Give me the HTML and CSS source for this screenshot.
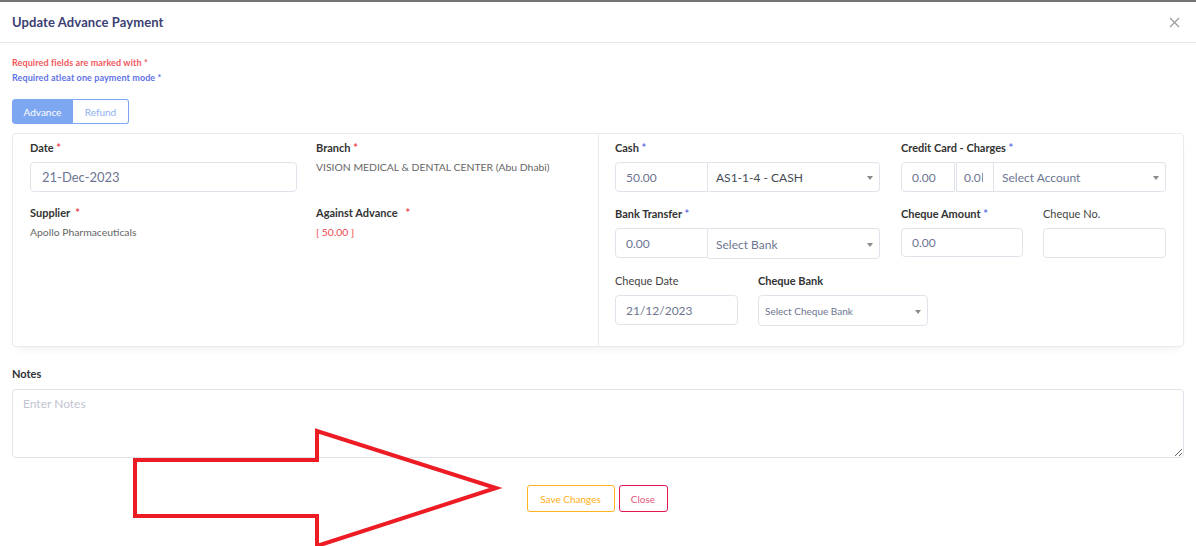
FILE: index.html
```html
<!DOCTYPE html>
<html lang="en">
<head>
<meta charset="utf-8">
<title>Update Advance Payment</title>
<link rel="stylesheet" href="styles.css">
</head>
<body>
<div class="modal">
  <div class="modal-header">
    <h5 class="modal-title">Update Advance Payment</h5>
    <svg class="close-x" width="11" height="11" viewBox="0 0 11 11"><path d="M1 1L10 10M10 1L1 10" stroke="#9a9a9a" stroke-width="1.2" fill="none"/></svg>
  </div>
  <div class="modal-body">
    <p class="req req-red">Required fields are marked with *</p>
    <p class="req req-blue">Required atleat one payment mode *</p>
    <div class="tabs">
      <span class="tab tab-active">Advance</span><span class="tab">Refund</span>
    </div>

    <div class="card">
      <div class="sec sec-left">
        <div class="field">
          <div class="label">Date <span class="star red">*</span></div>
          <div class="input input-lg">21-Dec-2023</div>
        </div>
        <div class="field">
          <div class="label">Branch <span class="star red">*</span></div>
          <div class="value">VISION MEDICAL &amp; DENTAL CENTER (Abu Dhabi)</div>
        </div>
        <div class="field">
          <div class="label">Supplier &nbsp;<span class="star red">*</span></div>
          <div class="value">Apollo Pharmaceuticals</div>
        </div>
        <div class="field">
          <div class="label">Against Advance &nbsp;&nbsp;<span class="star red">*</span></div>
          <div class="value value-red">[ 50.00 ]</div>
        </div>
      </div>

      <div class="sec sec-right">
        <div class="row2">
          <div class="field">
            <div class="label">Cash <span class="star blue">*</span></div>
            <div class="group">
              <div class="input g-cash">50.00</div>
              <div class="input select g-sel dark">AS1-1-4 - CASH<span class="caret"></span></div>
            </div>
          </div>
          <div class="field">
            <div class="label">Credit Card - Charges <span class="star blue">*</span></div>
            <div class="group">
              <div class="input g-cc1">0.00</div>
              <div class="input g-cc2">0.0</div>
              <div class="input select g-sel">Select Account<span class="caret"></span></div>
            </div>
          </div>
        </div>
        <div class="row2">
          <div class="field">
            <div class="label">Bank Transfer <span class="star blue">*</span></div>
            <div class="group">
              <div class="input g-cash">0.00</div>
              <div class="input select g-sel sel-low">Select Bank<span class="caret"></span></div>
            </div>
          </div>
          <div class="pair">
            <div class="field">
              <div class="label">Cheque Amount <span class="star blue">*</span></div>
              <div class="input input-short">0.00</div>
            </div>
            <div class="field">
              <div class="label label-light">Cheque No.</div>
              <div class="input"></div>
            </div>
          </div>
        </div>
        <div class="row-cheque">
          <div class="field f-cdate">
            <div class="label label-light">Cheque Date</div>
            <div class="input">21/12/2023</div>
          </div>
          <div class="field f-cbank">
            <div class="label">Cheque Bank</div>
            <div class="input select small">Select Cheque Bank<span class="caret"></span></div>
          </div>
        </div>
      </div>
    </div>

    <div class="notes">
      <div class="label">Notes</div>
      <textarea class="textarea" placeholder="Enter Notes"></textarea>
    </div>

    <div class="footer">
      <span class="btn btn-save">Save Changes</span>
      <span class="btn btn-close">Close</span>
    </div>
  </div>

  <svg class="arrow" width="1196" height="546" viewBox="0 0 1196 546">
    <polygon points="135,460 317,460 317,431 496,488 317,546 317,516 135,516" fill="none" stroke="#ed1c24" stroke-width="4"/>
  </svg>
</div>
</body>
</html>
```

FILE: styles.css
```css
* { box-sizing: border-box; }

html, body {
  margin: 0;
  padding: 0;
  background: #ffffff;
}

body {
  font-family: "Lato", "Noto Sans", "Liberation Sans", sans-serif;
  color: #343a40;
}

.modal {
  position: relative;
  width: 1196px;
  height: 546px;
  overflow: hidden;
  border-top: 2px solid #737373;
  background: #fff;
}

.modal-header {
  height: 41px;
  display: flex;
  align-items: center;
  justify-content: space-between;
  padding: 0 16px 0 12px;
  border-bottom: 1px solid #e6e6ef;
}

.modal-title {
  margin: 0;
  font-size: 13px;
  font-weight: 700;
  color: #3b4072;
  letter-spacing: 0.1px;
}

.modal-body {
  padding: 12px 12px 0 12px;
}

.req {
  margin: 0;
  font-size: 9px;
  font-weight: 700;
  line-height: 15px;
  letter-spacing: 0.1px;
}
.req-red { color: #f2575c; }
.req-blue { color: #5f73e6; }

.tabs {
  display: flex;
  margin-top: 14px;
  height: 25px;
}

.tab {
  display: flex;
  align-items: center;
  justify-content: center;
  height: 25px;
  font-size: 10px;
  color: #8eaef1;
  border: 1px solid #7ea6f0;
  border-left: none;
  border-radius: 0 3px 3px 0;
  width: 56px;
  background: #fff;
}
.tab-active {
  width: 61px;
  background: #7ea7f1;
  color: #fff;
  border: 1px solid #7ea7f1;
  border-radius: 3px 0 0 3px;
}

.card {
  margin-top: 9px;
  border: 1px solid #e7eaee;
  border-radius: 4px;
  display: grid;
  grid-template-columns: 585px 1fr;
  box-shadow: 0 6px 8px -4px rgba(0, 0, 0, 0.06);
}

.sec {
  padding: 7px 17px 20px 17px;
}

.sec-left {
  display: grid;
  grid-template-columns: 267px 1fr;
  column-gap: 19px;
  row-gap: 14px;
  align-content: start;
}

.sec-right {
  border-left: 1px solid #e7eaee;
  padding-left: 16px;
  display: flex;
  flex-direction: column;
  gap: 15px;
}

.label {
  font-size: 11px;
  font-weight: 700;
  color: #333;
  line-height: 14px;
  margin-bottom: 7px;
}
.label-light { font-weight: 400; color: #444; }

.star { font-weight: 700; }
.star.red { color: #f0474d; }
.star.blue { color: #5f73e6; }

.value {
  font-size: 10.4px;
  color: #666;
  line-height: 13px;
  margin-top: -1px;
}
.value-red { color: #f0474d; }

.input {
  height: 30px;
  border: 1px solid #e0e4ea;
  border-radius: 4px;
  padding: 0 10px;
  display: flex;
  align-items: center;
  font-size: 12px;
  color: #6d7591;
  background: #fff;
  white-space: nowrap;
  overflow: hidden;
  position: relative;
}

.input-lg {
  font-size: 13px;
  padding-left: 11px;
}

.row2 {
  display: grid;
  grid-template-columns: 265px 265px;
  column-gap: 21px;
}

.group {
  display: flex;
}
.group .input { border-radius: 0; }
.group .input:first-child { border-radius: 4px 0 0 4px; }
.group .input:last-child { border-radius: 0 4px 4px 0; }
.group .input + .input { border-left: none; }

.g-cash { width: 93px; }
.g-sel { flex: 1; padding-left: 8px; }
.g-cc1 { width: 54px; }
.g-cc2 { width: 38px; padding-left: 7px; border-left: 1px solid #e0e4ea !important; margin-left: 1px; }
.g-cc2::after {
  content: "";
  display: inline-block;
  width: 2px;
  height: 9px;
  margin-left: 1px;
  background: #8d93a8;
}

.dark { color: #444a55; }

.sel-low { padding-top: 2px; height: 31px; }

.select { padding-right: 22px; }
.caret {
  position: absolute;
  right: 6px;
  top: 50%;
  margin-top: -1px;
  width: 0;
  height: 0;
  border-left: 3px solid transparent;
  border-right: 3px solid transparent;
  border-top: 4px solid #8a8a8a;
}

.pair {
  display: grid;
  grid-template-columns: 122px 123px;
  column-gap: 20px;
}
.input-short { height: 29px; }

.row-cheque {
  display: flex;
  gap: 20px;
}
.f-cdate { width: 123px; }
.f-cbank { width: 170px; }
.f-cbank .input { height: 31px; padding-left: 6px; }
.small { font-size: 10px; }

.notes {
  margin-top: 20px;
}
.notes .label { margin-bottom: 8px; }

.textarea {
  display: block;
  width: 100%;
  height: 69px;
  border: 1px solid #e0e4ea;
  border-radius: 4px;
  padding: 6px 10px;
  font-family: "Lato", "Noto Sans", sans-serif;
  font-size: 12px;
  color: #444;
  resize: vertical;
  outline: none;
}
.textarea::placeholder { color: #bfc4cf; }

.footer {
  display: flex;
  justify-content: center;
  gap: 4px;
  margin-top: 27px;
  padding-right: 2px;
}

.btn {
  display: flex;
  align-items: center;
  justify-content: center;
  height: 27px;
  font-size: 10px;
  border-radius: 3px;
  background: #fff;
}
.btn-save {
  width: 88px;
  border: 1px solid #ffb21a;
  color: #ffae14;
}
.btn-close {
  width: 49px;
  border: 1px solid #e0174f;
  color: #e3587b;
}

.arrow {
  position: absolute;
  left: 0;
  top: -2px;
  pointer-events: none;
}
```
